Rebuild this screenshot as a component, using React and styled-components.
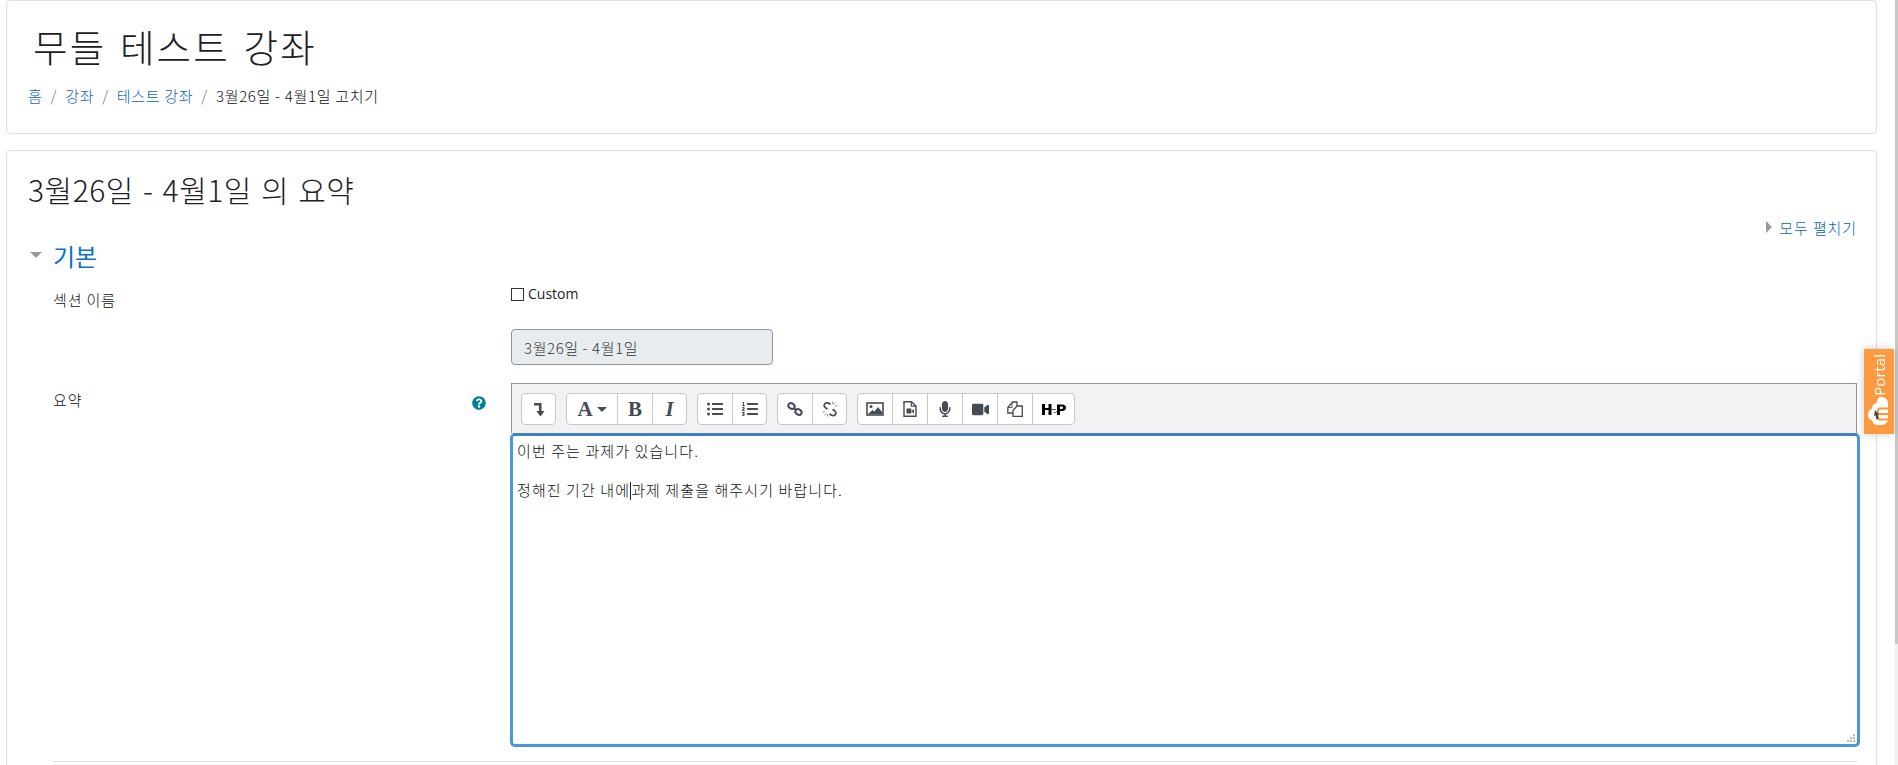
import React from "react";
import styled, { createGlobalStyle } from "styled-components";
import { FaListUl, FaListOl, FaMicrophone, FaVideo, FaQuestionCircle } from "react-icons/fa";

const Global = createGlobalStyle`
  html, body { margin: 0; padding: 0; background: #fff; height: 765px; overflow: hidden; }
  body {
    font-family: "Noto Sans CJK KR", "Open Sans", sans-serif;
    font-size: 15px;
    font-weight: 300;
    color: #0c0f11;
  }
`;

const Page = styled.div`
  width: 1871px;
  margin-left: 6px;
  display: flex;
  flex-direction: column;
  gap: 16px;
`;
const Track = styled.div`
  position: fixed; top: 0; right: 0; bottom: 0; width: 3px; background: #f0f0f0;
`;
const Thumb = styled.div`
  height: 644px; background: #c8c8c8;
`;
const Card = styled.section`
  border: 1px solid #dfdfdf;
  border-radius: 4px;
  background: #fff;
  box-sizing: border-box;
`;
const HeaderCard = styled(Card)`
  height: 134px;
  padding: 21px 17px 0 21px;
`;
const Title = styled.h1`
  margin: 0;
  padding-left: 5px;
  font-size: 37.5px;
  line-height: 48px;
  font-weight: 300;
  color: #1d2125;
  letter-spacing: 2.2px;
  word-spacing: 3px;
`;
const Crumbs = styled.nav`
  display: flex;
  align-items: center;
  margin-top: 16px;
  font-size: 15px;
  letter-spacing: .7px;
  line-height: 20px;
`;
const Crumb = styled.a`
  color: #0a62b8;
  text-decoration: none;
`;
const Sep = styled.span`
  color: #6a737b;
  margin: 0 8px;
`;
const Current = styled.span`
  color: #0c0f11;
`;
const MainCard = styled(Card)`
  height: 640px;
  padding: 16px 19px 0 21px;
`;
const Heading = styled.h2`
  margin: 0;
  font-size: 30px;
  line-height: 44px;
  font-weight: 300;
  color: #1d2125;
  letter-spacing: .5px;
  word-spacing: 2px;
`;
const ExpandAll = styled.a`
  display: flex;
  align-items: center;
  justify-content: flex-end;
  gap: 7px;
  height: 20px;
  margin-top: 6px;
  color: #0a62b8;
  font-size: 15px;
  letter-spacing: .9px;
`;
const Legend = styled.div`
  display: flex;
  align-items: center;
  gap: 11px;
  height: 36px;
  padding-left: 2px;
  color: #0f6fca;
  font-size: 24px;
  font-weight: 400;
`;
const Fieldset = styled.div`
  padding-left: 25px;
`;
const Row = styled.div`
  display: grid;
  grid-template-columns: 458px 1fr;
  margin-top: ${p => p.$top || 0}px;
`;
const LabelCell = styled.div`
  display: flex;
  justify-content: space-between;
  align-items: flex-start;
  padding: ${p => p.$pad}px 25px 0 0;
  font-size: 15px;
  letter-spacing: .9px;
  line-height: 20px;
`;
const Help = styled.span`
  display: flex;
  margin-top: 6px;
  color: #008196;
  font-size: 14px;
`;
const Check = styled.label`
  display: flex;
  align-items: center;
  gap: 4px;
  font-family: "Open Sans", sans-serif;
  font-weight: 400;
  font-size: 14px;
  line-height: 20px;
  color: #1d2125;
`;
const Box = styled.span`
  width: 13px;
  height: 13px;
  border: 1px solid #333;
  box-sizing: border-box;
`;
const Input = styled.div`
  width: 262px;
  height: 36px;
  margin-top: 25px;
  margin-bottom: 18px;
  padding: 0 12px;
  box-sizing: border-box;
  display: flex;
  align-items: center;
  background: #e9ecef;
  border: 1px solid #8f959e;
  border-radius: 4px;
  color: #2f363c;
  font-size: 15px;
  letter-spacing: .6px;
`;
const Toolbar = styled.div`
  display: flex;
  gap: 10px;
  height: 50px;
  box-sizing: border-box;
  padding: 9px 9px 0;
  background: #f2f2f2;
  border: 1px solid #8f959e;
  border-bottom: 0;
`;
const Group = styled.div`
  display: flex;
  height: 32px;
  box-sizing: border-box;
  background: #fff;
  border: 1px solid #c8c8c8;
  border-radius: 4px;
`;
const Btn = styled.span`
  width: ${p => p.$w || 35}px;
  flex: none;
  box-sizing: border-box;
  display: flex;
  align-items: center;
  justify-content: center;
  gap: 4px;
  color: #444c55;
  border-left: ${p => (p.$first ? 0 : "1px solid #c8c8c8")};
  font-family: "Liberation Serif", serif;
  font-weight: 700;
  font-size: 21px;
  font-style: ${p => (p.$i ? "italic" : "normal")};
  & svg { flex: none; }
`;
const Editor = styled.div`
  position: relative;
  height: 314px;
  margin: 0 -3px 0 -1px;
  padding: 4px;
  box-sizing: border-box;
  background: #fff;
  border: 3px solid #4a98dc;
  border-top-color: #3f81c4;
  border-radius: 5px;
  font-size: 15px;
  letter-spacing: 1.1px;
  line-height: 21px;
`;
const Para = styled.p`
  margin: 0 0 18px;
`;
const Caret = styled.span`
  display: inline-block;
  width: 1px;
  height: 18px;
  vertical-align: -4px;
  background: #222;
`;
const Grip = styled.svg`
  position: absolute;
  right: 1px;
  bottom: 1px;
`;
const Rule = styled.hr`
  margin: 14px 0 0;
  border: 0;
  border-top: 1px solid #dfdfdf;
`;
const Portal = styled.aside`
  position: fixed;
  left: 1864px;
  top: 349px;
  width: 30px;
  height: 85px;
  box-sizing: border-box;
  padding-top: 5px;
  background: rgba(252, 150, 55, .95);
  box-shadow: 0 0 8px rgba(0,0,0,.22);
  display: flex;
  flex-direction: column;
  align-items: center;
  color: #fff;
  font-family: "Open Sans", sans-serif;
  font-weight: 400;
  font-size: 15px;
`;
const PortalText = styled.span`
  writing-mode: vertical-rl;
  transform: rotate(180deg);
  line-height: 18px;
`;
const Cloud = styled.svg`
  position: absolute;
  left: 4px;
  top: 48px;
`;

const Ico = ({ children, w = 16, h = 16 }) => (
  <svg width={w} height={h} viewBox="0 0 16 16" fill="none" stroke="#444c55">{children}</svg>
);
const Tri = ({ w, h, d }) => (
  <svg width={w} height={h} viewBox={`0 0 ${w} ${h}`}><path d={d} fill="#999" /></svg>
);

export default function App() {
  return (
    <>
      <Global />
      <Track><Thumb /></Track>
      <Page>
        <HeaderCard>
          <Title>무들 테스트 강좌</Title>
          <Crumbs>
            <Crumb>홈</Crumb><Sep>/</Sep>
            <Crumb>강좌</Crumb><Sep>/</Sep>
            <Crumb>테스트 강좌</Crumb><Sep>/</Sep>
            <Current>3월26일 - 4월1일 고치기</Current>
          </Crumbs>
        </HeaderCard>
        <MainCard>
          <Heading>3월26일 - 4월1일 의 요약</Heading>
          <ExpandAll><Tri w={6} h={12} d="M0 0l6 6-6 6z" />모두 펼치기</ExpandAll>
          <Legend><Tri w={12} h={6} d="M0 0h12L6 6z" />기본</Legend>
          <Fieldset>
            <Row $top={11}>
              <LabelCell $pad={6}>섹션 이름</LabelCell>
              <div>
                <Check><Box />Custom</Check>
                <Input>3월26일 - 4월1일</Input>
              </div>
            </Row>
            <Row>
              <LabelCell $pad={7}>요약<Help><FaQuestionCircle /></Help></LabelCell>
              <div>
                <Toolbar>
                  <Group>
                    <Btn $first $w={33}>
                      <Ico><path d="M3 2h7.500v8h3l-4 5.500-4.200-5.500H8V4.500H3z" fill="#444c55" stroke="none" /></Ico>
                    </Btn>
                  </Group>
                  <Group>
                    <Btn $first $w={50}>A<svg width="10" height="5" viewBox="0 0 10 5"><path d="M0 0h10L5 5z" fill="#444c55" /></svg></Btn>
                    <Btn>B</Btn>
                    <Btn $i $w={34}>I</Btn>
                  </Group>
                  <Group>
                    <Btn $first $w={34}><FaListUl size={16} /></Btn>
                    <Btn $w={34}><FaListOl size={16} /></Btn>
                  </Group>
                  <Group>
                    <Btn $first $w={34}>
                      <Ico><g strokeWidth="2"><ellipse cx="4.500" cy="5" rx="3.300" ry="2.600" transform="rotate(35 4.500 5)" /><ellipse cx="11.500" cy="11" rx="3.300" ry="2.600" transform="rotate(35 11.500 11)" /><path d="M6.500 7l3 2" /></g></Ico>
                    </Btn>
                    <Btn $w={34}>
                      <Ico><g strokeWidth="1.700"><path d="M8.500 3.500C7.500 1.800 4.500 1.200 3 2.500 1.500 4 2 6 3.800 7L5.500 8" /><path d="M10.500 8.500l1.800 1c1.700 1 2.200 3 .7 4.500-1.500 1-4.200.7-5.500-1.200" /></g><g strokeWidth="1" stroke="#7f9cbd"><path d="M10.500.5v2.500M13.500 1.500l-2 2M15.500 5H13M5.500 15.500V13M2.500 14.500l2-2M.5 11H3" /></g></Ico>
                    </Btn>
                  </Group>
                  <Group>
                    <Btn $first $w={34}>
                      <svg width="18" height="14" viewBox="0 0 18 14" fill="none"><rect x="1" y="1" width="16" height="12" stroke="#444c55" strokeWidth="1.600" /><circle cx="5" cy="4.500" r="1.500" fill="#444c55" /><path d="M2 12l4.500-4 2 1.500 3.500-4.500 4 5v2z" fill="#444c55" /></svg>
                    </Btn>
                    <Btn>
                      <Ico><path d="M2 .8h7.500L14 5v10.200H2z" strokeWidth="1.400" /><path d="M9.300 1v4.200H14" strokeWidth="1.200" /><path d="M4.500 7.500h4.800v5H4.500zM9.500 10l2.500-2v4.500l-2.500-2z" fill="#444c55" stroke="none" /></Ico>
                    </Btn>
                    <Btn><FaMicrophone size={16} /></Btn>
                    <Btn><FaVideo size={17} /></Btn>
                    <Btn>
                      <Ico><path d="M6 12H.8V6.500L5.500 1H10v4" strokeWidth="1.300" /><path d="M5 1v5.500H1" strokeWidth=".9" /><path d="M6 15.300V9.500L10 5h5.300v10.300z" strokeWidth="1.300" /></Ico>
                    </Btn>
                    <Btn $w={42}>
                      <svg width="24" height="11" viewBox="0 0 24 11"><path d="M0 0h3v4h3.500V0h3v11h-3V6H3v5H0z" fill="#000" /><path d="M10 5.500h4M11.500 8.500c2 .3 3-.3 3-1.500" stroke="#555" strokeWidth="1" fill="none" /><path fillRule="evenodd" d="M15 .5h5.200c2.500 0 3.800 1.300 3.800 3.200S22.700 7 20.200 7H18v4h-3zM18 2.500V5h1.800c.8 0 1.200-.5 1.200-1.200s-.4-1.300-1.200-1.300z" fill="#000" /></svg>
                    </Btn>
                  </Group>
                </Toolbar>
                <Editor>
                  <Para>이번 주는 과제가 있습니다.</Para>
                  <Para>정해진 기간 내에<Caret />과제 제출을 해주시기 바랍니다.</Para>
                  <Grip width="9" height="9" viewBox="0 0 9 9" fill="#bdbdbd">
                    <rect x="6" y="0" width="2" height="2" /><rect x="3" y="3" width="2" height="2" /><rect x="6" y="3" width="2" height="2" /><rect x="0" y="6" width="2" height="2" /><rect x="3" y="6" width="2" height="2" /><rect x="6" y="6" width="2" height="2" />
                  </Grip>
                </Editor>
              </div>
            </Row>
            <Rule />
          </Fieldset>
        </MainCard>
      </Page>
      <Portal>
        <PortalText>Portal</PortalText>
        <Cloud width="20" height="28" viewBox="0 0 20 28">
          <path d="M13 0c4 0 7 2.500 7 6.500v15c0 4-3 6.500-7 6.500H9.500c-3 0-5-2-5.200-4.500C1.800 23 0 20.500 0 17.500c0-2.800 1.600-5 4-6C4 8.500 6 6.500 8.500 6.300 8.800 2.500 10.500 0 13 0z" fill="#fff" />
          <path d="M20 11.500h-8c-1.500 0-2 1-2 2v7c0 1 .5 2 2 2h8M20 17h-9" stroke="#fc9637" strokeWidth="2" fill="none" />
          <path d="M7 13l4 4.500-1.500.3 1 4.200-2 .5-1-4.300-1.500 1z" fill="#3f444a" />
        </Cloud>
      </Portal>
    </>
  );
}
